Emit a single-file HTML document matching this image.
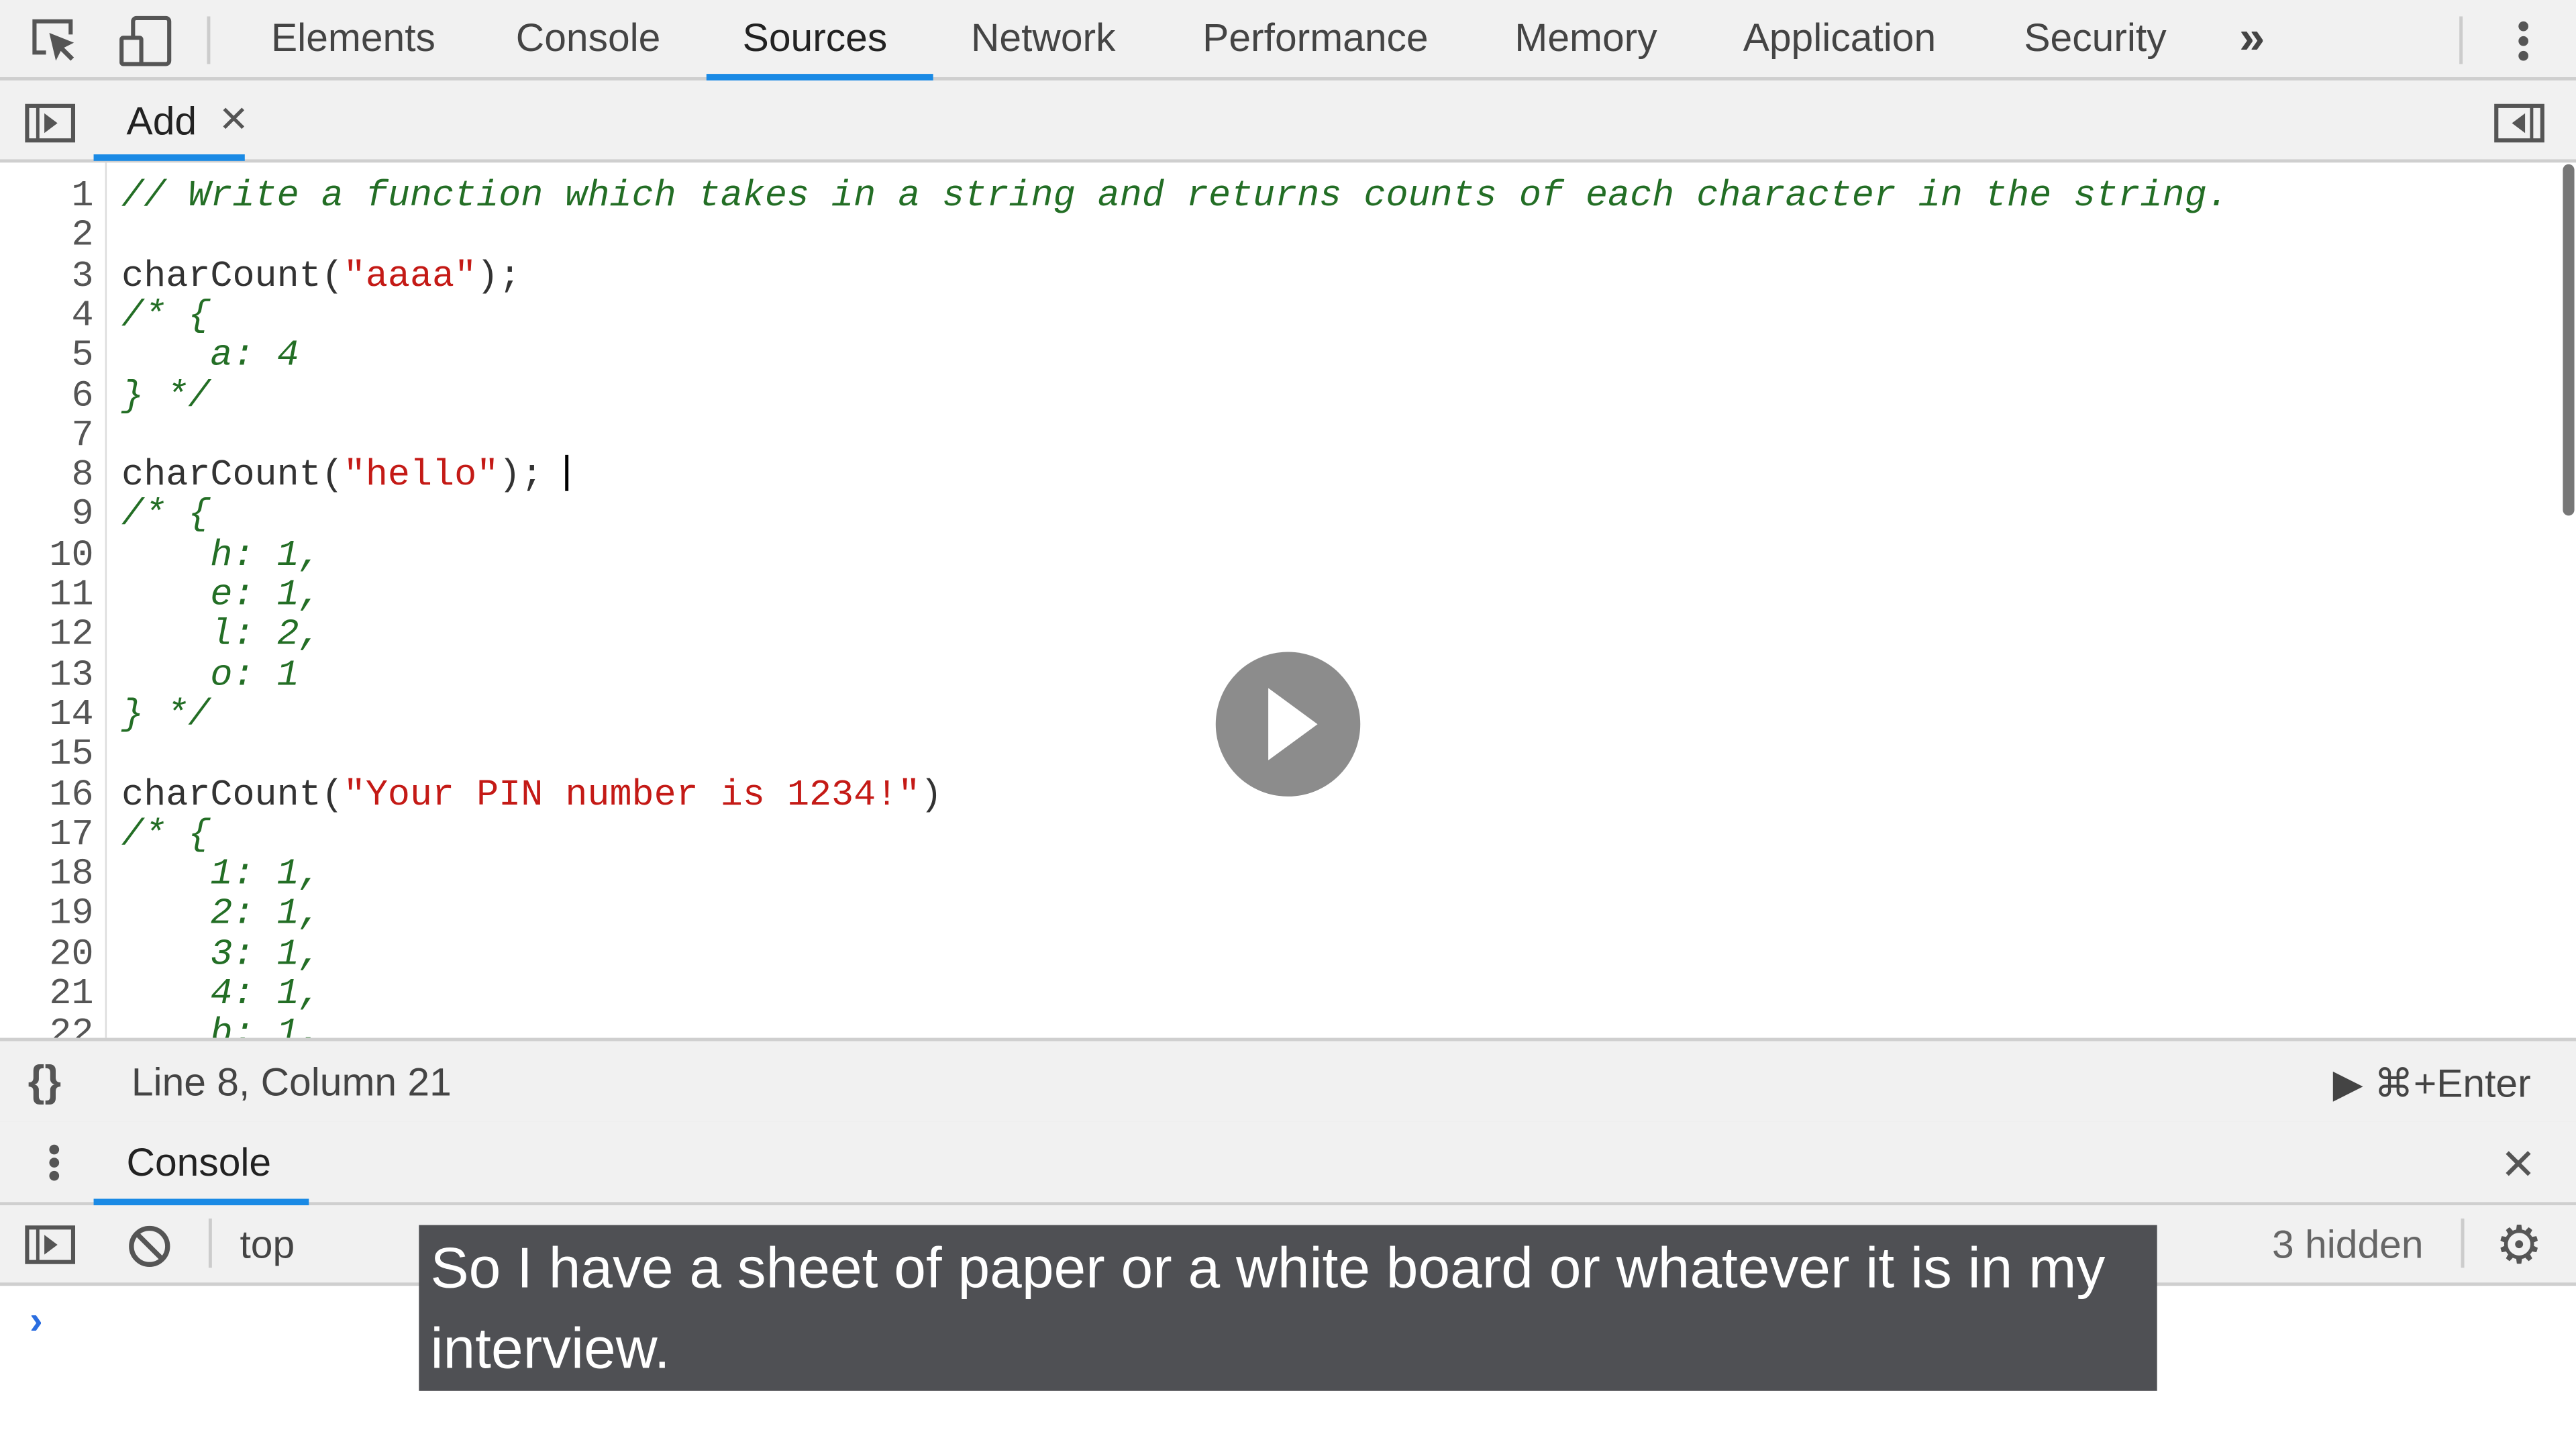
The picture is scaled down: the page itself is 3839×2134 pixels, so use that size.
<!DOCTYPE html>
<html><head><meta charset="utf-8"><style>
html,body{margin:0;padding:0;width:3839px;height:2134px;overflow:hidden;background:#fff}
#r{position:absolute;left:0;top:0;width:1568px;height:872px;transform:scale(2.44834,2.4472);transform-origin:0 0;font-family:"Liberation Sans",sans-serif;color:#333;background:#fff}
.a{position:absolute}
.bar{position:absolute;left:0;width:1568px;background:#f1f1f1;border-bottom:2px solid #cfcfcf}
.t{position:absolute;font-size:24px;color:#444;top:10px}
.code{position:absolute;left:0;top:107px;font-family:"Liberation Mono",monospace;font-size:22.5px;line-height:24.3px;white-space:pre}
.ln{position:absolute;left:0;width:57px;text-align:right;color:#555}
.tx{position:absolute;left:74px}
.c{color:#236e25;font-style:italic}
.s{color:#c41a16}
</style></head><body><div id="r">
<div class="bar" style="top:0;height:47px">
 <svg class="a" style="left:18px;top:10px" width="32" height="30" viewBox="0 0 32 30"><path d="M10 22H3V3h22v8" fill="none" stroke="#555" stroke-width="2.5"/><path d="M12 10l4 17 3-6 6 6 2-2-6-6 6-3z" fill="#555"/></svg>
 <svg class="a" style="left:72px;top:9px" width="34" height="32"><rect x="9" y="2" width="22" height="28" rx="2" fill="none" stroke="#555" stroke-width="2.5"/><rect x="2" y="14" width="12" height="16" rx="1" fill="#f1f1f1" stroke="#555" stroke-width="2.5"/></svg>
 <div class="a" style="left:126px;top:10px;width:2px;height:29px;background:#ccc"></div>
 <div class="t" style="left:165px">Elements</div>
 <div class="t" style="left:314px">Console</div>
 <div class="t" style="left:452px;color:#222">Sources</div>
 <div class="a" style="left:430px;top:45px;width:138px;height:4px;background:#1a8ae5"></div>
 <div class="t" style="left:591px">Network</div>
 <div class="t" style="left:732px">Performance</div>
 <div class="t" style="left:922px">Memory</div>
 <div class="t" style="left:1061px">Application</div>
 <div class="t" style="left:1232px">Security</div>
 <div class="t" style="left:1363px;font-weight:bold;top:7px;font-size:28px">»</div>
 <div class="a" style="left:1497px;top:10px;width:2px;height:29px;background:#ccc"></div>
 <div class="a" style="left:1533px;top:13px;width:6px;height:6px;border-radius:3px;background:#555;box-shadow:0 9px #555,0 18px #555"></div>
</div>
<div class="bar" style="top:49px;height:48px">
 <svg class="a" style="left:15px;top:14px" width="32" height="24"><rect x="1.5" y="1.5" width="28" height="21" fill="none" stroke="#555" stroke-width="2.5"/><line x1="8" y1="2" x2="8" y2="22" stroke="#555" stroke-width="2"/><path d="M12 6l8 6-8 6z" fill="#555"/></svg>
 <div class="t" style="left:77px;top:12px;color:#222">Add</div>
 <div class="t" style="left:133px;top:11px;font-size:22px;color:#555">✕</div>
 <div class="a" style="left:57px;top:45px;width:92px;height:4px;background:#1a8ae5"></div>
 <svg class="a" style="left:1518px;top:14px" width="32" height="24"><rect x="1.5" y="1.5" width="28" height="21" fill="none" stroke="#555" stroke-width="2.5"/><line x1="23" y1="2" x2="23" y2="22" stroke="#555" stroke-width="2"/><path d="M19 6l-8 6 8 6z" fill="#555"/></svg>
</div>
<div class="a" style="left:64px;top:99px;width:1px;height:534px;background:#ddd"></div>
<div class="a" style="left:1560px;top:100px;width:7px;height:214px;border-radius:4px;background:#777"></div>
<div class="code">
<div class="ln" style="top:0">1</div><div class="tx c" style="top:0">// Write a function which takes in a string and returns counts of each character in the string.</div>
<div class="ln" style="top:24.3px">2</div>
<div class="ln" style="top:48.6px">3</div><div class="tx" style="top:48.6px">charCount(<span class="s">"aaaa"</span>);</div>
<div class="ln" style="top:72.9px">4</div><div class="tx c" style="top:72.9px">/* {</div>
<div class="ln" style="top:97.2px">5</div><div class="tx c" style="top:97.2px">    a: 4</div>
<div class="ln" style="top:121.5px">6</div><div class="tx c" style="top:121.5px">} */</div>
<div class="ln" style="top:145.8px">7</div>
<div class="ln" style="top:170.1px">8</div><div class="tx" style="top:170.1px">charCount(<span class="s">"hello"</span>); <span style="display:inline-block;width:2px;height:22px;background:#000;vertical-align:-4px"></span></div>
<div class="ln" style="top:194.4px">9</div><div class="tx c" style="top:194.4px">/* {</div>
<div class="ln" style="top:218.7px">10</div><div class="tx c" style="top:218.7px">    h: 1,</div>
<div class="ln" style="top:243px">11</div><div class="tx c" style="top:243px">    e: 1,</div>
<div class="ln" style="top:267.3px">12</div><div class="tx c" style="top:267.3px">    l: 2,</div>
<div class="ln" style="top:291.6px">13</div><div class="tx c" style="top:291.6px">    o: 1</div>
<div class="ln" style="top:315.9px">14</div><div class="tx c" style="top:315.9px">} */</div>
<div class="ln" style="top:340.2px">15</div>
<div class="ln" style="top:364.5px">16</div><div class="tx" style="top:364.5px">charCount(<span class="s">"Your PIN number is 1234!"</span>)</div>
<div class="ln" style="top:388.8px">17</div><div class="tx c" style="top:388.8px">/* {</div>
<div class="ln" style="top:413.1px">18</div><div class="tx c" style="top:413.1px">    1: 1,</div>
<div class="ln" style="top:437.4px">19</div><div class="tx c" style="top:437.4px">    2: 1,</div>
<div class="ln" style="top:461.7px">20</div><div class="tx c" style="top:461.7px">    3: 1,</div>
<div class="ln" style="top:486px">21</div><div class="tx c" style="top:486px">    4: 1,</div>
<div class="ln" style="top:510.3px">22</div><div class="tx c" style="top:510.3px">    b: 1,</div>
</div>
<div class="a" style="left:0;top:632px;width:1568px;height:240px;background:#fff"></div>
<div class="bar" style="top:632px;height:49px;border-top:2px solid #cfcfcf">
 <div class="t" style="left:17px;top:9px;font-weight:bold;font-size:26px;color:#555">{}</div>
 <div class="t" style="left:80px;top:12px">Line 8, Column 21</div>
 <div class="t" style="left:1420px;top:12px;color:#444">▶ ⌘+Enter</div>
</div>
<div class="bar" style="top:683px;height:49px">
 <div class="a" style="left:30px;top:14px;width:6px;height:6px;border-radius:3px;background:#555;box-shadow:0 8px #555,0 16px #555"></div>
 <div class="t" style="left:77px;top:12px;color:#222">Console</div>
 <div class="a" style="left:57px;top:47px;width:131px;height:4px;background:#1a8ae5"></div>
 <div class="t" style="left:1522px;top:11px;font-size:26px;color:#555">✕</div>
</div>
<div class="bar" style="top:734px;height:47px">
 <svg class="a" style="left:15px;top:12px" width="32" height="24"><rect x="1.5" y="1.5" width="28" height="21" fill="none" stroke="#555" stroke-width="2.5"/><line x1="8" y1="2" x2="8" y2="22" stroke="#555" stroke-width="2"/><path d="M12 6l8 6-8 6z" fill="#555"/></svg>
 <svg class="a" style="left:77px;top:11px" width="28" height="28"><circle cx="14" cy="14" r="11" fill="none" stroke="#555" stroke-width="3"/><line x1="6" y1="6" x2="22" y2="22" stroke="#555" stroke-width="3"/></svg>
 <div class="a" style="left:127px;top:8px;width:2px;height:30px;background:#ccc"></div>
 <div class="t" style="left:146px;top:11px">top</div>
 <div class="t" style="left:1383px;top:11px;color:#666">3 hidden</div>
 <div class="a" style="left:1498px;top:8px;width:2px;height:30px;background:#ccc"></div>
 <div class="t" style="left:1519px;top:5px;font-size:32px;color:#555">⚙</div>
</div>
<div class="a" style="left:18px;top:791px;color:#2a6de0;font-size:24px;font-weight:bold">›</div>
<div class="a" style="left:740px;top:397px;width:88px;height:88px;border-radius:50%;background:rgba(120,120,120,0.85)"></div>
<svg class="a" style="left:740px;top:397px" width="88" height="88"><path d="M32 22l30 22-30 22z" fill="#fff"/></svg>
<div class="a" style="left:255px;top:746px;width:1058px;height:101px;background:#4f5054"></div>
<div class="a" style="left:262px;top:748px;color:#fff;font-size:35px;line-height:49px;width:1050px">So I have a sheet of paper or a white board or whatever it is in my interview.</div>
</div></body></html>
